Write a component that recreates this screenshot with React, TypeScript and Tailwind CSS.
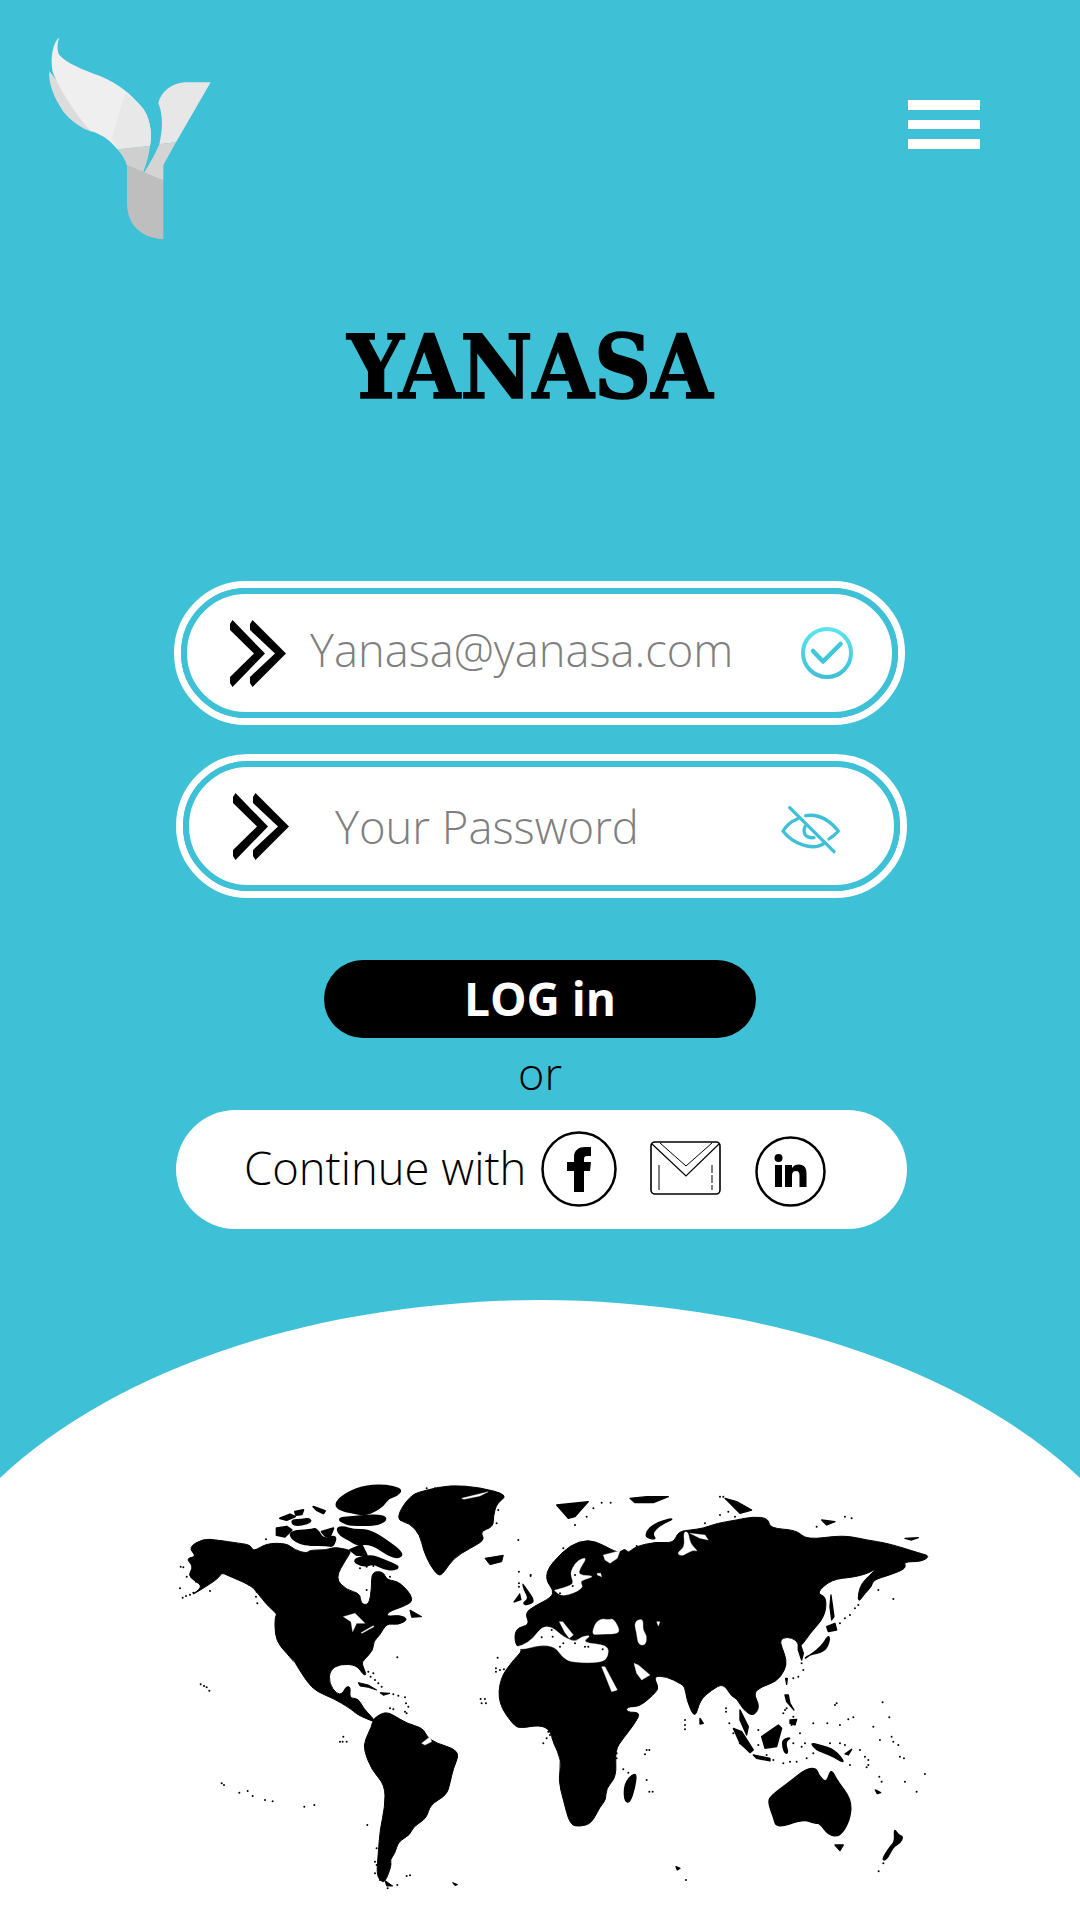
function smooth(s: string): string {
  const p = s.trim().split(/\s+/).map((t) => t.split(",").map(Number));
  const n = p.length;
  const mid = (a: number[], b: number[]) => `${(a[0] + b[0]) / 2} ${(a[1] + b[1]) / 2}`;
  let d = `M${mid(p[n - 1], p[0])}`;
  for (let i = 0; i < n; i++) {
    const nx = p[(i + 1) % n];
    d += ` Q${p[i][0]} ${p[i][1]} ${mid(p[i], nx)}`;
  }
  return d + " Z";
}

function Shape({ points }: { points: string }) {
  const count = points.trim().split(/\s+/).length;
  return count >= 6 ? <path d={smooth(points)} /> : <polygon points={points} />;
}

const AM: string[] = [
  "85,262 130,236 170,240 240,250 272,255 280,275 320,250 380,250 405,270 440,280 450,270 500,270 520,262 545,265 575,272 560,295 525,355 560,390 600,400 603,432 627,435 635,385 635,335 670,335 680,360 720,365 765,420 730,440 685,455 680,470 720,465 745,478 715,495 680,490 660,525 640,545 640,570 612,600 605,610 620,645 610,645 590,615 540,612 510,630 507,670 530,702 548,702 557,680 572,680 568,715 595,715 610,745 635,770 648,788 610,772 590,762 570,745 520,715 470,695 440,665 400,600 360,560 345,525 345,470 352,462 320,435 290,395 270,375 200,345 185,338 175,355 130,385 90,408 130,380 100,360 85,345 100,320 78,295 110,290",
  "705,178 750,105 800,90 870,75 960,82 1045,105 1010,130 1000,170 1000,200 960,215 975,240 930,265 880,295 850,340 835,348 810,315 790,270 780,225 750,190",
  "975,295 1030,286 1025,305 990,314",
  "750,450 785,470 755,472",
  "595,668 625,675 650,690 625,682 600,678",
  "660,698 690,700 670,706",
  "640,775 675,755 700,765 740,790 790,805 800,830 830,850 880,865 897,885 880,925 870,970 860,1005 810,1035 800,1075 760,1100 750,1125 715,1145 705,1180 690,1200 695,1215 675,1268 660,1262 650,1240 655,1180 660,1110 675,1040 675,975 635,930 612,870 615,840 635,800",
  "675,1262 698,1278 680,1278",
  "878,1268 893,1274 885,1277",
];
const AM_WHITE: string[] = [
  "400,602 436,665 420,650 405,622",
  "550,470 585,460 615,490 590,490 578,515 573,485",
  "603,518 640,497 642,500 606,520",
  "785,850 810,830 815,845 795,855",
  "905,115 985,95 960,108 912,118",
];
const ARCTIC: string[] = [
  "520,60 575,35 640,30 697,42 680,62 655,68 640,90 615,108 590,118 570,118 545,112 510,105 495,88",
  "330,130 360,118 375,125 350,135",
  "430,95 465,108 460,115 440,105",
  "375,110 400,105 395,118 378,120",
  "365,135 395,135 415,130 425,140 395,150 370,150",
  "500,130 560,125 620,120 650,128 640,142 610,150 560,150 530,148",
  "320,160 350,155 365,165 345,185 320,180",
  "360,170 420,165 440,160 460,195 500,180 490,215 470,210 420,210 390,205 365,190",
  "455,170 490,160 480,185 465,182",
  "500,160 520,155 550,165 595,165 640,190 700,235 685,250 655,240 620,215 590,205 560,210 540,195 510,180",
  "540,225 575,210 590,240 560,240",
  "545,255 600,240 640,255 690,275 670,285 640,280 610,265 580,275",
];
const AM_DOTS: number[][] = [
  [60,385],[68,413],[78,408],[90,404],[100,398],[150,393],[80,350],[108,365],[122,673],[132,678],[140,682],[148,692],[185,970],[192,975],[238,998],[263,993],[278,1008],[315,1020],[338,1024],[433,1040],[463,1035],[622,1095],[540,845],[550,830],[560,845],[548,845],[1013,593],[1008,625],[1008,635],[1020,630],[1032,628],[962,717],[975,717],[965,730],[978,730],[712,592],[625,635],[640,640],[632,650],[645,660],[655,670],[665,680],[700,703],[715,707],[735,712],[738,730],[745,740],[735,755],[740,760],[690,745],[700,748],[290,395],[288,410],[292,430],[268,375],[650,1165],[645,1205],[650,1215],[645,1240],[660,1260],[683,1285],[712,1275],[740,1248],[750,1246],[1075,240],[1010,190],[1015,150],[800,85],[825,85],[1165,815],[1170,825],[1160,835],[1150,850],[1112,348],[1077,335],[1077,370],[1077,380],[600,325],[620,320],[640,318],[620,390],[690,350],[640,470],[318,238],[62,320],[70,322],
];
const EA: string[] = [
  "10,570 -20,600 -60,655 -65,730 -20,795 0,805 60,795 90,810 100,850 125,900 115,960 130,1020 150,1095 180,1100 215,1090 240,1040 258,1020 258,985 290,950 285,870 310,835 345,790 362,757 320,757 320,740 360,740 410,695 415,680 400,648 440,650 480,670 495,680 500,720 525,778 540,720 575,690 610,670 635,710 650,715 670,750 700,770 720,740 700,700 725,680 770,665 795,630 800,600 785,560 780,540 800,530 830,540 840,565 870,520 915,470 920,410 888,400 935,358 1000,352 1045,340 1070,325 1050,345 1025,370 1015,400 1015,428 1035,400 1055,380 1060,360 1110,345 1160,325 1150,305 1205,305 1230,288 1200,280 1105,250 1040,240 970,225 860,240 830,210 750,205 745,175 700,170 650,180 590,190 550,205 510,210 475,215 460,250 410,245 345,260 325,280 315,265 295,280 250,255 205,238 150,255 100,305 80,335 80,365 100,390 95,412 40,440 15,460 30,495 -15,505 -15,555",
];
const EA_BLACK: string[] = [
  "370,230 400,190 470,172 420,195 395,220 410,240",
  "110,135 205,125 165,170 145,175",
  "615,115 650,125 695,150 660,160",
  "905,180 945,185 920,195",
  "330,115 380,110 445,110 400,128 345,128",
  "705,212 740,195 745,205 720,215",
  "835,535 850,580 845,600 835,570",
  "850,600 905,560 925,525 930,540 915,575 865,585",
  "920,500 945,490 950,510 925,515",
  "933,405 942,470 935,480 930,440",
  "350,935 345,980 330,1028 315,1025 312,990 320,960",
  "540,775 550,790 540,792",
  "640,805 665,815 700,870 690,878 660,850",
  "660,750 685,800 680,825 660,780",
  "725,830 775,795 785,805 770,860 735,865",
  "700,885 750,895 750,903 710,895",
  "795,705 805,705 810,730 822,750 800,725",
  "810,780 830,778 825,795 810,790",
  "870,848 900,855 945,870 978,912 940,890 905,875 890,870",
  "797,655 802,655 800,673",
  "750,1010 810,965 860,925 890,925 895,945 920,970 933,925 950,960 995,1020 990,1080 960,1130 925,1125 900,1090 885,1090 850,1078 770,1105 760,1070 745,1030",
  "945,1155 970,1155 960,1172",
  "1122,1105 1135,1125 1150,1130 1140,1150 1120,1160 1100,1200 1085,1200 1110,1160 1125,1145",
  "1155,235 1195,233 1175,240",
  "1066,990 1082,998 1072,1001",
  "468,1220 480,1225 472,1230",
  "788,838 815,832 795,845 805,880 795,880 788,860",
  "975,882 995,868 985,885",
];
const EU_WHITE: string[] = [
  "5,412 35,408 70,385 95,350 125,350 150,372 170,385 195,395 215,380 245,375 215,398 295,405 295,440 275,458 190,458 160,445 135,410 90,405 35,420",
  "148,335 158,335 190,375 178,385 165,368",
  "245,375 255,340 275,325 295,330 310,325 330,360 320,372 270,372",
  "372,335 400,325 398,360 410,375 408,405 385,405 380,370",
  "440,335 450,335 445,348",
  "275,470 285,470 322,540 305,545",
  "372,460 385,465 420,495 395,510 380,490",
  "215,145 230,145 210,175 205,195 255,198 225,208 210,215 222,235 160,262 130,240 140,240 185,225 190,215 180,190 195,160",
  "262,190 272,190 275,200 262,195",
  "280,135 330,122 322,145 300,160 285,150",
  "500,130 525,110 520,65 535,65 540,100 565,125 550,120 530,130 515,138",
  "540,70 585,75 595,90 570,85",
];
const EU_BLACK: string[] = [
  "35,215 50,235 78,275 50,288 35,280 55,265 40,240",
  "10,275 30,248 35,270 12,278",
];
const EU_DOTS: number[][] = [[125,360],[128,380],[95,382],[150,410],[160,400],[225,410],[235,410],[195,400],[278,418],[188,228],[150,250],[195,195]];
const EA_DOTS: number[][] = [
  [245,128],[272,128],[220,145],[200,170],[165,195],[350,258],[130,265],[100,310],[32,345],[495,780],[495,795],[495,808],[618,745],[618,755],[628,790],[640,820],[660,850],[715,810],[715,855],[950,730],[945,735],[1088,727],[1108,772],[1060,800],[1000,772],[985,778],[960,795],[922,790],[880,790],[840,820],[1115,830],[1120,845],[1135,855],[1140,890],[1152,895],[1080,840],[1020,870],[1035,890],[1045,900],[1045,915],[1040,922],[1078,950],[1085,965],[1155,965],[1190,995],[1215,942],[1075,390],[1120,417],[380,870],[388,870],[375,883],[380,960],[388,995],[398,995],[290,880],[290,895],[310,928],[325,938],[498,1260],[1076,1234],[1090,1210],[600,110],[610,110],[600,165],[625,155],[645,170],[555,190],[890,200],[995,175],[975,170],[820,655],[835,650],[850,630],[845,610],[845,590],[960,490],[975,475],[990,465],[1005,445],[1015,435],[740,885],[760,900],[790,910],[810,905],[830,905],[860,895],[880,880],[820,850],[845,860],[855,850],[930,850],[960,850],[975,855],[990,915],[815,795],[800,745],[795,750],[820,770],[790,760],
];

function Chevrons() {
  return (
    <svg className="w-[56px] h-[67px] shrink-0" viewBox="0 0 56 67" fill="#000">
      <polygon points="2.5,0 35,33.5 2.5,67 0,63 0,57 24,33.5 0,10 0,4" />
      <polygon points="22.5,0 56,33.5 22.5,67 20,63 20,57 45,33.5 20,10 20,4" />
    </svg>
  );
}

function Logo() {
  return (
    <svg className="w-[300px] h-[270px] shrink-0" viewBox="0 0 900 810">
      <path d="M148 213 C145 250 160 290 190 335 C215 365 245 385 275 395 L300 380 L185 260 Z" fill="#dcdcdc" />
      <path d="M178 112 C158 128 150 175 158 215 C170 250 225 345 272 392 C310 405 335 425 352 448 L450 437 C458 400 450 345 420 315 C395 285 355 250 300 228 C250 210 200 190 178 165 C170 150 172 130 178 112 Z" fill="#efefef" />
      <path d="M375 282 L335 415 C343 425 348 440 352 448 L450 437 C458 400 450 345 420 315 C408 302 392 290 375 282 Z" fill="#e8e8e8" />
      <path d="M632 247 L555 247 C515 250 482 275 475 310 C490 345 488 390 478 433 L528 427 Z" fill="#e7e7e7" />
      <path d="M352 448 L450 437 C447 465 440 490 432 510 L428 525 L381 497 C375 478 365 462 352 448 Z" fill="#cfcfcf" />
      <path d="M478 433 L528 427 L490 495 L490 541 L428 525 L440 505 C455 480 468 458 478 433 Z" fill="#d4d4d4" />
      <path d="M381 495 L490 541 L490 718 C430 715 381 680 381 610 Z" fill="#bebebe" />
    </svg>
  );
}

export default function App() {
  return (
    <div className="relative w-[1080px] h-[1920px] overflow-hidden bg-[#3ec0d7] flex flex-col font-['Open_Sans',sans-serif] font-light">
      <div className="flex h-[270px]">
        <Logo />
        <div className="ml-[608px] mt-[100px] w-[72px] flex flex-col gap-[10px]">
          <div className="h-[9.5px] bg-white" />
          <div className="h-[9.5px] bg-white" />
          <div className="h-[9.5px] bg-white" />
        </div>
      </div>

      <div className="mt-[47px] h-[100px] ml-[346px] w-[368px] flex justify-center items-center text-black font-['DejaVu_Serif',serif] font-bold text-[88px] leading-[100px] whitespace-nowrap">
        <span className="scale-x-[.9] [-webkit-text-stroke:1.5px_black]">YANASA</span>
      </div>

      <div className="mt-[164px] ml-[174px] w-[731px] h-[144px] rounded-full border-[7px] border-white">
        <div className="h-full rounded-full border-[6px] border-[#3ec0d7] bg-white flex items-center pl-[43px]">
          <Chevrons />
          <span className="ml-[24px] mb-[6px] text-[45.3px] text-[#7f7f7f] leading-none whitespace-nowrap">Yanasa@yanasa.com</span>
          <svg className="ml-auto mr-[39px] w-[52px] h-[52px] shrink-0" viewBox="801 627 52 52" fill="none">
            <defs>
              <linearGradient id="chk" x1="0" y1="0" x2="0" y2="1">
                <stop offset="0" stopColor="#5be4ec" />
                <stop offset="1" stopColor="#3ec0d7" />
              </linearGradient>
            </defs>
            <circle cx="827" cy="653" r="24" stroke="url(#chk)" strokeWidth="4" />
            <path d="M813 651 L823 661.5 L840.5 644" stroke="#3ec8da" strokeWidth="4.5" strokeLinecap="round" strokeLinejoin="round" />
          </svg>
        </div>
      </div>

      <div className="mt-[29px] ml-[176px] w-[731px] h-[144px] rounded-full border-[7px] border-white">
        <div className="h-full rounded-full border-[6px] border-[#3ec0d7] bg-white flex items-center pl-[44px]">
          <Chevrons />
          <span className="ml-[46px] mt-[1px] text-[45.4px] text-[#7f7f7f] leading-none whitespace-nowrap">Your Password</span>
          <svg className="ml-auto mr-[35px] mt-[8px] w-[90px] h-[70px] shrink-0" viewBox="0 0 270 210" fill="none" stroke="#3ec0d7" strokeWidth="10" strokeLinecap="round" strokeLinejoin="round">
            <path d="M62 38 L195 170" />
            <path d="M85 72 C65 80 50 95 42 108 C70 145 130 170 165 145" />
            <path d="M110 62 C150 55 185 80 208 108 C200 118 190 125 180 132" />
            <path d="M108 95 C100 115 110 130 135 128" />
          </svg>
        </div>
      </div>

      <div className="mt-[62px] ml-[324px] w-[432px] h-[78px] pb-[2px] rounded-full bg-black flex items-center justify-center text-white text-[46px] font-bold leading-none">
        LOG in
      </div>
      <div className="h-[72px] pb-[4px] flex items-center justify-center text-black text-[45px] leading-none">or</div>

      <div className="ml-[176px] w-[731px] h-[119px] rounded-full bg-white flex items-center pl-[68px] text-black">
        <span className="mb-[4px] text-[45.4px] leading-none whitespace-nowrap">Continue with</span>
        <svg className="ml-[15px] mb-[1px] w-[76px] h-[76px] shrink-0" viewBox="541 1131 76 76" fill="none">
          <circle cx="579" cy="1169" r="36.5" stroke="#000" strokeWidth="2.5" />
          <path d="M574 1192 V1171 H567 V1162 H574 V1157 C574 1150 579 1147 585 1147 H591 V1156 H587 C585 1156 584 1157 584 1159 V1162 H591 L590 1171 H584 V1192 Z" fill="#000" />
        </svg>
        <svg className="ml-[33px] mb-[3px] w-[71px] h-[54px] shrink-0" viewBox="650 1141 71 54" fill="none" stroke="#000">
          <rect x="651" y="1142" width="69" height="52" rx="4" strokeWidth="1.6" />
          <path d="M652 1144 L686 1176 L719 1144" strokeWidth="1.2" />
          <path d="M659 1165 V1190" strokeWidth="1" />
          <path d="M712 1165 V1190" strokeWidth="1" strokeDasharray="8 2" />
          <path d="M660 1143 L686 1166 L712 1143" strokeWidth="1" />
        </svg>
        <svg className="ml-[34px] w-[71px] h-[72px] shrink-0 self-start mt-[26px]" viewBox="755 1136 71 72" fill="none">
          <circle cx="790.5" cy="1171.5" r="34" stroke="#000" strokeWidth="2.5" />
          <circle cx="778.5" cy="1158" r="4" fill="#000" />
          <path d="M775 1165 h7 v22 h-7 Z" fill="#000" />
          <path d="M785 1165 h7 v3 c1.5 -2.5 4 -3.5 7 -3.5 c5.5 0 7.5 3.5 7.5 9 V1187 h-7 v-11.5 c0 -3 -1 -4.5 -3.5 -4.5 c-3 0 -4 2 -4 4.5 V1187 h-7 Z" fill="#000" />
        </svg>
      </div>

      <div className="mt-[71px] h-[620px] bg-white [clip-path:path('M0_178A640_384_0_0_1_1080_178V620H0Z')]">
        <svg className="w-[1080px] h-[620px]" viewBox="0 1300 1080 620">
          <g transform="translate(160 1460) scale(0.3333)" fill="#000" stroke="#000" strokeWidth="3" strokeLinejoin="round">
            {AM.map((p, i) => <Shape key={i} points={p} />)}
            {AM_DOTS.map(([x, y], i) => <circle key={i} cx={x} cy={y} r="3" strokeWidth="0" />)}
          </g>
          <g transform="translate(170 1475) scale(0.3333)" fill="#000" stroke="#000" strokeWidth="6" strokeLinejoin="round">
            {ARCTIC.map((p, i) => <Shape key={i} points={p} />)}
          </g>
          <g transform="translate(160 1460) scale(0.3333)" fill="#fff" stroke="#fff" strokeWidth="1">
            {AM_WHITE.map((p, i) => <polygon key={i} points={p} />)}
          </g>
          <g transform="translate(520 1460) scale(0.3333)" fill="#000" stroke="#000" strokeWidth="3" strokeLinejoin="round">
            {EA.map((p, i) => <Shape key={i} points={p} />)}
          </g>
          <g transform="translate(510 1510) scale(0.3333)" fill="#fff" stroke="#fff" strokeWidth="1" strokeLinejoin="round">
            {EU_WHITE.map((p, i) => <Shape key={i} points={p} />)}
          </g>
          <g transform="translate(510 1510) scale(0.3333)" fill="#000">
            {EU_BLACK.map((p, i) => <Shape key={i} points={p} />)}
            {EU_DOTS.map(([x, y], i) => <circle key={i} cx={x} cy={y} r="3" />)}
          </g>
          <g transform="translate(520 1460) scale(0.3333)" fill="#000" stroke="#000" strokeWidth="4" strokeLinejoin="round">
            {EA_BLACK.map((p, i) => <Shape key={i} points={p} />)}
            {EA_DOTS.map(([x, y], i) => <circle key={i} cx={x} cy={y} r="3" strokeWidth="0" />)}
          </g>
        </svg>
      </div>
    </div>
  );
}
